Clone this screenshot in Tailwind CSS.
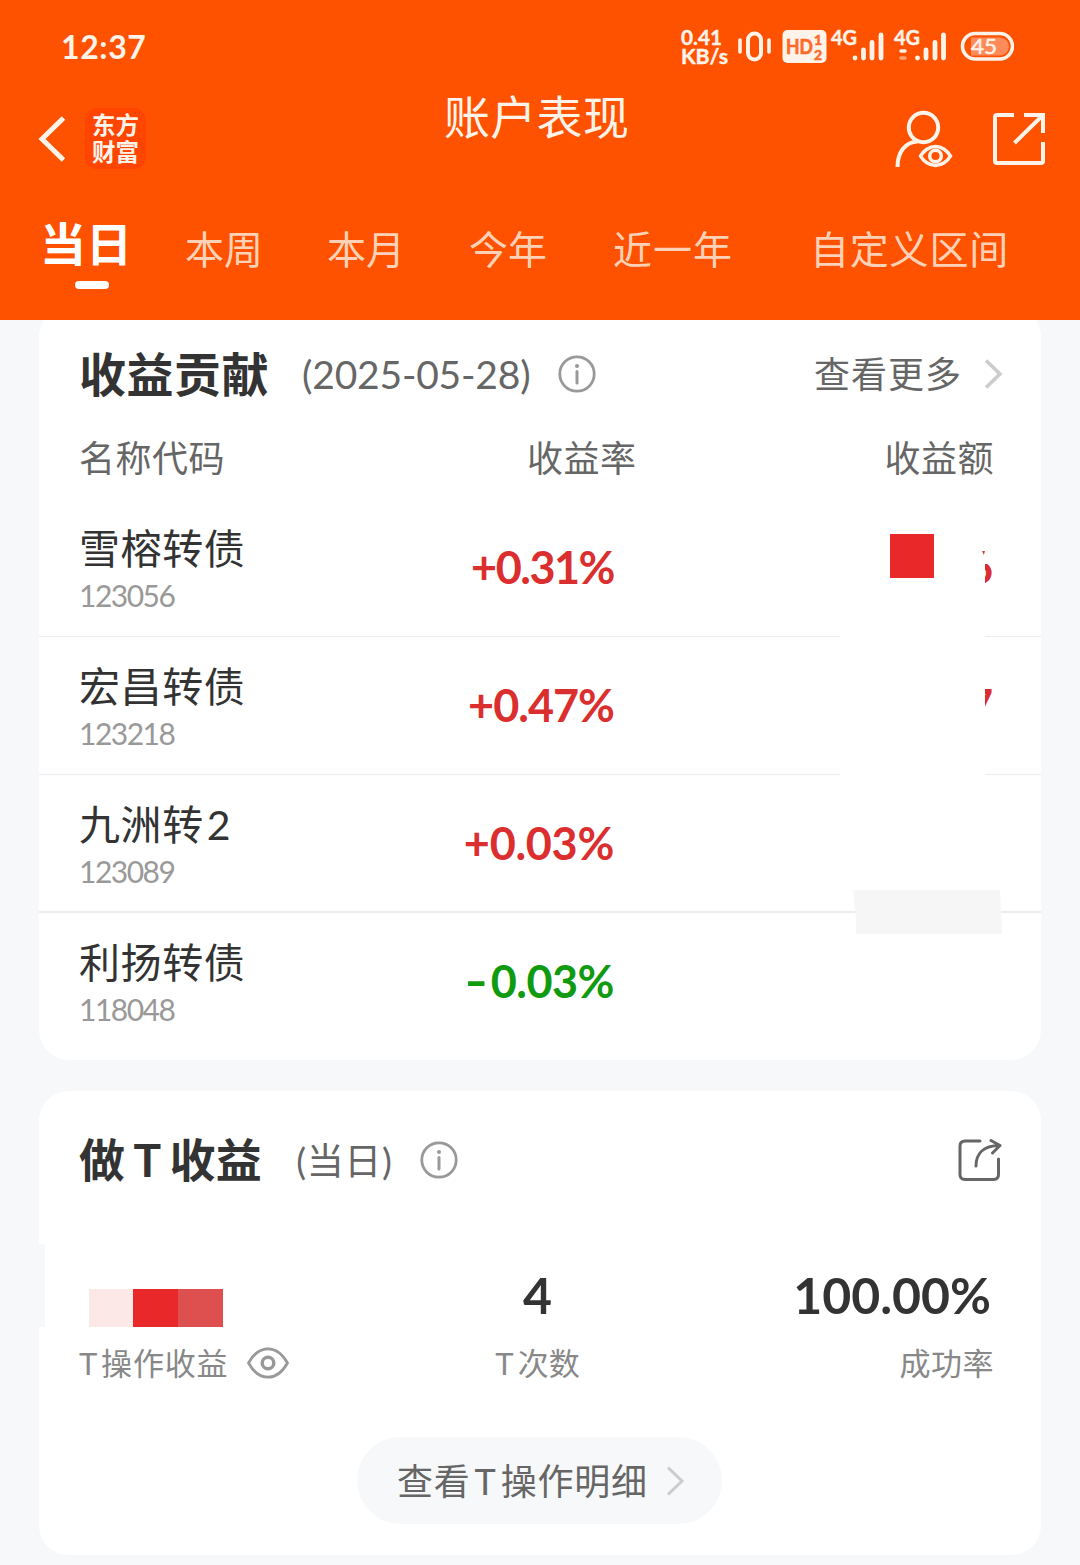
<!DOCTYPE html>
<html lang="zh-CN">
<head>
  <meta charset="UTF-8" />
  <meta name="viewport" content="width=device-width, initial-scale=1.0" />
  <title>账户表现</title>
  <script src="https://cdn.jsdelivr.net/npm/@tailwindcss/browser@4"></script>
  <style>
    body {
      font-family: Lato, 'Noto Sans CJK SC', sans-serif;
    }
  </style>
</head>
<body class="w-[1080px] h-[1565px] overflow-hidden bg-[#f6f8fa] text-[#333] leading-none whitespace-nowrap">

  <header class="relative z-10 h-80 bg-[#ff5200] text-[#fff3ea]">
    <!-- status bar -->
    <div class="flex h-[94px] items-center justify-between pl-[61px] pr-[66px]">
      <span class="text-[32px] font-bold tracking-[0.6px]">12:37</span>
      <svg class="mb-1 h-[60px] w-[334px]" viewBox="680 15 334 60" fill="none" stroke="#fff3ea">
        <g fill="#fff3ea" stroke="#fff3ea" stroke-width=".4" font-family="Lato" font-weight="700">
          <text x="681" y="45" font-size="21" textLength="41" lengthAdjust="spacingAndGlyphs">0.41</text>
          <text x="681" y="63.500" font-size="20" textLength="47" lengthAdjust="spacingAndGlyphs">KB/s</text>
          <text x="831" y="45" font-size="20" textLength="26" lengthAdjust="spacingAndGlyphs">4G</text>
          <text x="894" y="45" font-size="20" textLength="26" lengthAdjust="spacingAndGlyphs">4G</text>
        </g>
        <rect x="748" y="33.500" width="13" height="26" rx="6.500" stroke-width="4" />
        <path d="M740 40v12M769 40v12" stroke-width="3.600" stroke-linecap="round" />
        <rect x="782.500" y="30" width="44" height="33" rx="5" fill="#fff3ea" stroke="none" />
        <g fill="#ff6a28" stroke="#ff6a28" stroke-width=".6" font-family="Lato" font-weight="700">
          <text x="786" y="54" font-size="20" textLength="27" lengthAdjust="spacingAndGlyphs">HD</text>
          <text x="814" y="45" font-size="14">1</text>
          <text x="814" y="59.500" font-size="14">2</text>
        </g>
        <g stroke-width="4.800" stroke-linecap="round">
          <path d="M855 58v.01M863.500 50v8M872 42.500v15.500M881 35v23" />
          <path d="M917.500 58v.01M926 50v8M935 42.500v15.500M943.500 35v23" />
        </g>
        <path d="M901 51h4" stroke-width="3.500" stroke-linecap="round" />
        <path d="M901 58h4" stroke-width="3.500" stroke-linecap="round" opacity=".5" />
        <path d="M971 37.500h29a8.800 8.800 0 0 1 0 18h-29z" fill="#ff8a5a" stroke="none" />
        <rect x="962.500" y="33.500" width="50" height="25.500" rx="12.700" stroke-width="3.600" />
        <text x="971" y="54" font-size="21" font-family="Lato" font-weight="400" fill="#fff3ea" stroke="#fff3ea" stroke-width=".5" textLength="26" lengthAdjust="spacingAndGlyphs">45</text>
      </svg>
    </div>

    <!-- title bar -->
    <div class="grid h-[90px] grid-cols-[1fr_190px_1fr] items-center pl-[38px] pr-[34px]">
      <div class="flex items-center gap-[19px]">
        <svg class="h-[46px] w-7" viewBox="0 0 28 46" fill="none" stroke="#fff3ea" stroke-width="5">
          <path d="M25.500 2 4 23l21.500 21" />
        </svg>
        <div class="-mt-[2px] flex h-[61px] w-[61px] flex-col items-center justify-center gap-[3px] rounded-xl bg-[#ff4500] font-['Noto_Sans_CJK_SC'] text-[23.500px] font-bold">
          <span>东方</span>
          <span>财富</span>
        </div>
      </div>
      <h1 class="-ml-[3px] -mt-11 text-[46px] tracking-[0.3px]">账户表现</h1>
      <div class="flex items-center justify-end gap-[39px]">
        <svg class="h-[60px] w-[58px]" viewBox="895 109 58 60" fill="none" stroke="#fff3ea" stroke-width="4">
          <circle cx="923.500" cy="127.500" r="14.700" />
          <path d="M897.500 167c0-15 8-25 20-25.500" />
          <path d="M920.500 156c3-5.500 9-9.500 15-9.500s12 4 15 9.500c-3 5.500-9 9.500-15 9.500s-12-4-15-9.500z" stroke-width="3.500" />
          <circle cx="935.500" cy="156" r="5.800" stroke-width="3.500" />
        </svg>
        <svg class="h-[54px] w-[54px]" viewBox="992 112 54 54" fill="none" stroke="#fff3ea" stroke-width="4">
          <path d="M1014 115h-17q-2 0-2 2v44q0 2 2 2h44q2 0 2-2v-19M1024 115h19v18M1043 115l-28.500 28" />
        </svg>
      </div>
    </div>

    <!-- period tabs -->
    <nav class="grid h-[131px] grid-cols-[144px_142px_142px_144px_197px_1fr] items-center pl-[41px] text-[39px] text-[#ffd2b8]">
      <div class="relative -ml-[1px] -mt-[11px] text-[46px] font-bold text-white">当日
        <span class="absolute left-[35px] top-[60px] h-2 w-[34px] rounded-full bg-white"></span>
      </div>
      <span>本周</span>
      <span>本月</span>
      <span>今年</span>
      <span class="tracking-[1px]">近一年</span>
      <span class="tracking-[0.8px]">自定义区间</span>
    </nav>
  </header>

  <main class="mx-[39px]">
    <!-- profit contribution -->
    <section class="relative -mt-[14px] h-[754px] rounded-[30px] bg-white pt-[14px]">
      <div class="flex h-[108px] items-center pl-10 pr-[38px]">
        <h2 class="text-[47px] font-bold tracking-[0.5px]">收益贡献</h2>
        <span class="ml-[33px] text-[39px] tracking-[-0.2px] text-[#666]">(2025-05-28)</span>
        <svg class="ml-7 h-[38px] w-[38px]" viewBox="0 0 38 38" fill="none" stroke="#999" stroke-width="2.800">
          <circle cx="19" cy="19" r="17.200" />
          <path d="M19 16.500V28" stroke-linecap="round" stroke-width="3" />
          <circle cx="19" cy="11" r="2" fill="#999" stroke="none" />
        </svg>
        <span class="ml-auto text-[36px] tracking-[1px] text-[#666]">查看更多</span>
        <svg class="ml-[21px] h-[30px] w-5" viewBox="0 0 20 30" fill="none" stroke="#ccc" stroke-width="3.600">
          <path d="M3 1.500 17 15 3 28.500" />
        </svg>
      </div>
      <div class="grid h-[60px] grid-cols-[448px_1fr_auto] items-center pl-10 pr-[47px] text-[36px] tracking-[0.5px] text-[#666]">
        <span>名称代码</span>
        <span>收益率</span>
        <span>收益额</span>
      </div>

      <div class="mt-[11px]">
        <div class="relative grid h-[138px] grid-cols-[380px_155px_1fr] items-center border-b border-[#ececec] pl-10 pr-12">
          <div>
            <p class="mt-[3px] text-[41px] tracking-[0.6px]">雪榕转债</p>
            <p class="mt-[11px] text-[30px] tracking-[-1.500px] text-[#999]">123056</p>
          </div>
          <p class="text-right text-[45px] font-bold tracking-[-1.500px] text-[#db2f2f]">+0.31%</p>
          <p class="text-right text-[45px] font-bold text-[#db2f2f]">6</p>
          <span class="absolute left-[801px] top-1 h-[135px] w-[145px] bg-white"></span>
          <span class="absolute left-[944px] top-10 h-[25px] w-3 bg-white"></span>
          <span class="absolute left-[943px] top-[52px] h-1 w-[3px] bg-[#c44] [clip-path:polygon(0_0,100%_0,60%_100%)]"></span>
          <span class="absolute left-[851px] top-[35px] h-11 w-11 bg-[#e92829]"></span>
        </div>
        <div class="relative grid h-[138px] grid-cols-[380px_155px_1fr] items-center border-b border-[#ececec] pl-10 pr-12">
          <div>
            <p class="mt-[3px] text-[41px] tracking-[0.6px]">宏昌转债</p>
            <p class="mt-[11px] text-[30px] tracking-[-1.500px] text-[#999]">123218</p>
          </div>
          <p class="text-right text-[45px] font-bold tracking-[-1px] text-[#db2f2f]">+0.47%</p>
          <p class="text-right text-[45px] font-bold text-[#db2f2f]">7</p>
          <span class="absolute left-[801px] top-1 h-[138px] w-[145px] bg-white"></span>
        </div>
        <div class="relative grid h-[138px] grid-cols-[380px_155px_1fr] items-center border-b-2 border-[#ececec] pl-10 pr-12">
          <div>
            <p class="mt-[3px] text-[41px] tracking-[0.6px]">九洲转<span class="ml-[3px]">2</span></p>
            <p class="mt-[11px] text-[30px] tracking-[-1.500px] text-[#999]">123089</p>
          </div>
          <p class="text-right text-[45px] font-bold tracking-[-0.3px] text-[#db2f2f]">+0.03%</p>
          <svg class="absolute left-[814px] top-[114px] z-10 h-[46px] w-[150px]" viewBox="0 0 150 46">
            <path d="M0 1h147l2 44H3V31z" fill="#f6f6f6" />
          </svg>
        </div>
        <div class="grid h-[138px] grid-cols-[380px_155px_1fr] items-center pl-10 pr-12">
          <div>
            <p class="mt-[1px] text-[41px] tracking-[0.6px]">利扬转债</p>
            <p class="mt-[11px] text-[30px] tracking-[-1.500px] text-[#999]">118048</p>
          </div>
          <p class="-mt-[2px] text-right text-[45px] font-bold tracking-[-0.500px] text-[#109a10]"><span class="mr-[3px] inline-block origin-right scale-x-140">-</span>0.03%</p>
        </div>
      </div>
    </section>

    <!-- T trading profit -->
    <section class="relative mt-[31px] h-[464px] rounded-[30px] bg-white">
      <span class="absolute left-0 top-[153px] h-[83px] w-[6px] bg-[#f6f8fa]"></span>
      <div class="flex h-[138px] items-center pl-10 pr-[39px]">
        <h2 class="text-[46px] font-bold tracking-[0.4px]">做<span class="mx-2">T</span>收益</h2>
        <span class="ml-[34px] text-[37px] tracking-[0.6px] text-[#666]">(当日)</span>
        <svg class="ml-7 h-[38px] w-[38px]" viewBox="0 0 38 38" fill="none" stroke="#999" stroke-width="2.800">
          <circle cx="19" cy="19" r="17.200" />
          <path d="M19 16.500V28" stroke-linecap="round" stroke-width="3" />
          <circle cx="19" cy="11" r="2" fill="#999" stroke="none" />
        </svg>
        <svg class="ml-auto h-[44px] w-[44px]" viewBox="958 1138 44 44" fill="none" stroke="#666" stroke-width="3" stroke-linecap="round" stroke-linejoin="round">
          <path d="M980 1141h-15q-5 0-5 5v28.500q0 5 5 5h28.500q5 0 5-5V1159" />
          <path d="M976 1166c0-12 7-20.500 23.500-20.500M991 1140.500l9 5-7.500 7.500" />
        </svg>
      </div>

      <div class="grid h-[160px] grid-cols-[300px_1fr_300px] pl-10 pr-[47px] text-[31px] text-[#888]">
        <div>
          <div class="ml-[10px] mt-[60px] flex h-[38px]">
            <span class="w-[44px] bg-[#fde8e8]"></span>
            <span class="w-[45px] bg-[#e92829]"></span>
            <span class="w-[45px] bg-[#de5050]"></span>
          </div>
          <div class="mt-[15px] flex h-[42px] items-center">
            <span class="tracking-[0.8px]"><span class="mr-[3px]">T</span>操作收益</span>
            <svg class="ml-[19px] h-8 w-[42px]" viewBox="0 0 42 32" fill="none" stroke="#999" stroke-width="2.800">
              <path d="M1.500 16C6 8 13 1.800 21 1.800S36 8 40.500 16C36 24 29 30.200 21 30.200S6 24 1.500 16z" stroke-linejoin="round" />
              <circle cx="21" cy="16" r="5.800" stroke-width="3.400" />
            </svg>
          </div>
        </div>
        <div class="pl-[2px] text-center">
          <p class="mt-[41px] text-[50px] font-bold text-[#333]">4</p>
          <p class="mt-[28px]"><span class="mr-1">T</span>次数</p>
        </div>
        <div class="text-right">
          <p class="mr-[3px] mt-[41px] text-[50px] font-bold text-[#333]">100.00%</p>
          <p class="mt-[28px] tracking-[0.5px]">成功率</p>
        </div>
      </div>

      <div class="ml-[318px] mt-[48px] flex h-[87px] w-[365px] items-center rounded-full bg-[#f7f8fa] pl-10 text-[36px] tracking-[0.8px] text-[#666]">
        <span>查看<span class="mx-[4px]">T</span>操作明细</span>
        <svg class="ml-[18px] h-[30px] w-5" viewBox="0 0 20 30" fill="none" stroke="#ccc" stroke-width="3">
          <path d="M2 1.500 16 15 2 28.500" />
        </svg>
      </div>
    </section>
  </main>
</body>
</html>
